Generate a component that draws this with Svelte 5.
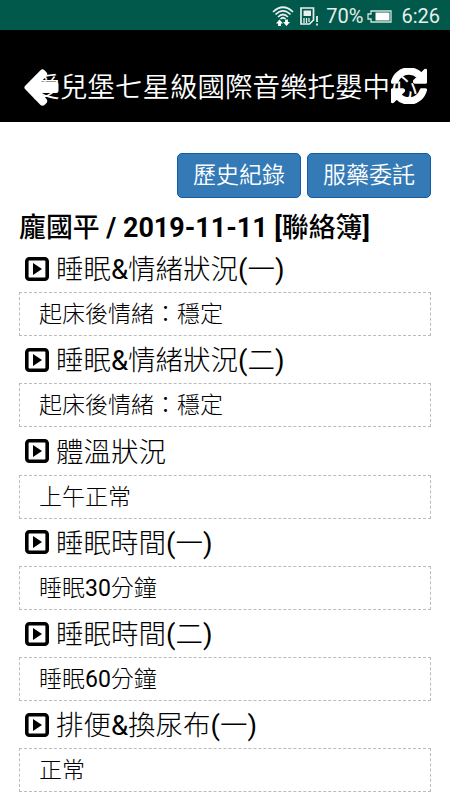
<script lang="ts">
	type Entry = {
		heading: string;
		value: string;
	};

	const title = '愛兒堡七星級國際音樂托嬰中心';
	const actions = ['歷史紀錄', '服藥委託'];

	const entries: Entry[] = [
		{ heading: '睡眠&情緒狀況(一)', value: '起床後情緒：穩定' },
		{ heading: '睡眠&情緒狀況(二)', value: '起床後情緒：穩定' },
		{ heading: '體溫狀況', value: '上午正常' },
		{ heading: '睡眠時間(一)', value: '睡眠30分鐘' },
		{ heading: '睡眠時間(二)', value: '睡眠60分鐘' },
		{ heading: '排便&換尿布(一)', value: '正常' }
	];

	// latin runs are set heavier than the chinese around them
	const runs = (text: string) => text.split(/([\x20-\x7e]+)/).filter(Boolean);
	const isLatin = (text: string) => /^[\x20-\x7e]/.test(text);
</script>

{#snippet mixed(text: string)}
	<span>{#each runs(text) as run}<span class:latin={isLatin(run)}>{run}</span>{/each}</span>
{/snippet}

<div class="screen">
	<div class="status">
		<svg width="22" height="22" viewBox="0 0 22 22" fill="none" stroke="#e8efed">
			<path d="M1 6Q11-3.500 21 6M3.500 8.500Q11 1.300 18.500 8.500M6 11Q11 6 16 11M8.500 13Q11 10.500 13.500 13" stroke-width="1.700" />
			<path d="M7.500 13.500l3.500 4H8.900V20H6.100v-2.500H4zM14.500 20l-3.500-4h2.100v-2.500h2.800V16H18z" fill="#fff" stroke="none" />
		</svg>
		<svg class="sim" width="20" height="20" viewBox="0 0 20 20" fill="none" stroke="#e8efed">
			<path d="M1 1h12.500v12l-4 4H1z" stroke-width="1.700" />
			<path d="M3.500 3.500h7.500V9H3.500z" fill="#e8efed" stroke="none" />
			<path d="M4 11v5M6.500 11v5M9 11v4" stroke-width="1.300" />
			<path d="M17 9v6M17 16.500v2" stroke-width="1.800" />
		</svg>
		<span class="percent">70%</span>
		<svg class="battery" width="25" height="13" viewBox="0 0 25 13">
			<path d="M4 1h20v11H4V9H1V4h3z" fill="none" stroke="#d5e2df" stroke-width="1.300" />
			<path d="M8.500 2.500H22.500v8H8.500z" fill="#fff" />
		</svg>
		<span class="clock">6:26</span>
	</div>

	<header>
		<h1>{title}</h1>
		<svg class="back" width="36" height="38" viewBox="0 0 36 38" fill="#fff">
			<path d="M1 17 16.500 1.200Q18.500-.5 20.500 1.200L22.500 3.200Q24 5 22.500 7L17 13H32Q34.500 13 34.500 15.500V21.500Q34.500 24 32 24H17L22.500 30Q24 32 22.500 34L20.500 36Q18.500 37.500 16.500 36L1 20Q-.3 18.500 1 17z" />
		</svg>
		<svg class="refresh" width="36" height="36" viewBox="0 0 1536 1536" fill="#fff" stroke="#fff" stroke-width="56">
			<path d="M1511 928q0 5-1 7-64 268-268 434.500T764 1536q-146 0-282.500-55T238 1324l-129 129q-19 19-45 19t-45-19-19-45V960q0-26 19-45t45-19h448q26 0 45 19t19 45-19 45l-137 137q71 66 161 102t187 36q134 0 250-65t186-179q11-17 53-117 8-23 30-23h192q13 0 22.500 9.500t9.500 22.500zm25-800v448q0 26-19 45t-45 19h-448q-26 0-45-19t-19-45 19-45l138-138Q969 256 768 256q-134 0-250 65T332 500q-11 17-53 117-8 23-30 23H50q-13 0-22.500-9.500T18 608v-7q65-268 270-434.500T768 0q146 0 284 55.500T1297 212l130-129q19-19 45-19t45 19 19 45z" />
		</svg>
	</header>

	<main>
		<div class="actions">
			{#each actions as action}
				<button>{action}</button>
			{/each}
		</div>

		<h2>{@render mixed('龐國平 / 2019-11-11 [聯絡簿]')}</h2>

		{#each entries as entry}
			<section>
				<h3>
					<svg width="24" height="24" viewBox="0 0 24 24">
						<rect x="1.800" y="1.800" width="20.400" height="20.400" rx="2.500" fill="none" stroke="#000" stroke-width="3.600" />
						<path d="M8 6v12l9-6z" />
					</svg>
					{@render mixed(entry.heading)}
				</h3>
				<div class="value">{@render mixed(entry.value)}</div>
			</section>
		{/each}
	</main>
</div>

<style>
	:global(body) {
		margin: 0;
		background: #fff;
	}

	.screen {
		width: 450px;
		height: 800px;
		overflow: hidden;
		background: #fff;
		color: #000;
		font-family: Roboto, 'Noto Sans CJK TC', sans-serif;
	}

	.status {
		display: flex;
		align-items: center;
		box-sizing: border-box;
		height: 30px;
		padding: 3px 10px 0 0;
		justify-content: flex-end;
		background: #00594b;
		color: #e8efed;
		font-size: 20px;
		line-height: 27px;
	}

	.sim {
		margin-left: 6px;
	}

	.percent {
		margin-left: 6px;
	}

	.battery {
		margin-left: 4px;
	}

	.clock {
		margin-left: 9px;
	}

	header {
		position: relative;
		display: flex;
		align-items: center;
		justify-content: center;
		height: 92px;
		background: #000;
	}

	h1 {
		margin: 24px 0 0;
		color: #fff;
		font-size: 27.5px;
		font-weight: 350;
		line-height: 40px;
		white-space: nowrap;
	}

	/* the icons float over the ends of the long title */
	.back {
		position: absolute;
		left: 24px;
		top: 39px;
	}

	.refresh {
		position: absolute;
		right: 23px;
		top: 38px;
	}

	main {
		padding: 31px 19px 0;
	}

	.actions {
		display: flex;
		justify-content: flex-end;
		gap: 6px;
	}

	button {
		box-sizing: border-box;
		width: 124px;
		height: 45px;
		padding: 0;
		border: 1px solid #145c9e;
		border-radius: 5px;
		background: #337ab7;
		color: #fff;
		font-family: inherit;
		font-size: 23px;
		font-weight: 350;
		line-height: 43px;
	}

	h2 {
		margin: 10px 0 0;
		font-size: 26.9px;
		font-weight: 500;
		line-height: 40px;
		white-space: nowrap;
	}

	section {
		height: 91.3px;
	}

	h3 {
		display: flex;
		align-items: center;
		gap: 7px;
		height: 44px;
		margin: 0;
		padding-left: 6px;
		font-size: 27.5px;
		font-weight: 300;
		line-height: 44px;
		white-space: nowrap;
	}

	h3 svg {
		margin-bottom: 3px;
	}

	.latin {
		font-weight: 400;
	}

	h2 .latin {
		font-weight: 700;
	}

	.value {
		box-sizing: border-box;
		height: 44px;
		padding-left: 19px;
		border: 1px dashed #bbb;
		font-size: 23px;
		font-weight: 300;
		line-height: 43px;
	}
</style>
